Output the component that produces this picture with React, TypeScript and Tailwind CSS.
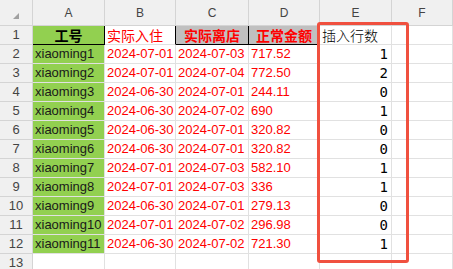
import React from 'react';

const COLS = ['A', 'B', 'C', 'D', 'E', 'F'];

const ROWS: [string, string, string, string, number][] = [
  ['xiaoming1', '2024-07-01', '2024-07-03', '717.52', 1],
  ['xiaoming2', '2024-07-01', '2024-07-04', '772.50', 2],
  ['xiaoming3', '2024-06-30', '2024-07-01', '244.11', 0],
  ['xiaoming4', '2024-06-30', '2024-07-02', '690', 1],
  ['xiaoming5', '2024-06-30', '2024-07-01', '320.82', 0],
  ['xiaoming6', '2024-06-30', '2024-07-01', '320.82', 0],
  ['xiaoming7', '2024-07-01', '2024-07-03', '582.10', 1],
  ['xiaoming8', '2024-07-01', '2024-07-03', '336', 1],
  ['xiaoming9', '2024-06-30', '2024-07-01', '279.13', 0],
  ['xiaoming10', '2024-07-01', '2024-07-02', '296.98', 0],
  ['xiaoming11', '2024-06-30', '2024-07-02', '721.30', 1],
];

const gridCols = 'grid grid-cols-[33px_72px_71px_73px_71px_72px_1fr]';
const cell = 'h-[19px] border-r border-b border-[#e1e1e1] px-[2px] flex items-end pb-[1px] leading-[16px] whitespace-nowrap overflow-hidden';
const rowHead = 'h-[19px] border-r border-b border-[#d4d4d4] bg-[#f0f0f0] flex items-center justify-center text-[13px] text-[#444]';
const cjk = { fontFamily: '"Noto Sans CJK SC", sans-serif' };
const mono = { fontFamily: '"DejaVu Sans Mono", monospace' };

export default function App() {
  return (
    <div
      className="relative w-[453px] h-[269px] overflow-hidden bg-white text-[13px]"
      style={{ fontFamily: '"Liberation Sans", "Noto Sans CJK SC", sans-serif' }}
    >
      {/* column headers */}
      <div className={gridCols}>
        <div className="h-[26px] border-r border-b border-[#d4d4d4] bg-[#f0f0f0] relative">
          <div className="absolute right-[13px] bottom-[6px] w-0 h-0 border-l-[6px] border-l-transparent border-b-[6px] border-b-[#a0a0a0]" />
        </div>
        {COLS.map((c) => (
          <div key={c} className="h-[26px] border-r border-b border-[#d4d4d4] bg-[#f0f0f0] flex items-end justify-center pb-[3px] text-[12px] text-[#444]">
            {c}
          </div>
        ))}
      </div>

      {/* row 1 */}
      <div className={gridCols}>
        <div className={rowHead}>1</div>
        <div className={`${cell} bg-[#92d050] justify-center font-bold text-black text-[14px] !border-r-black !border-b-black`} style={cjk}>工号</div>
        <div className={`${cell} text-[#ff0000] text-[14px] !border-r-black`} style={cjk}>实际入住</div>
        <div className={`${cell} bg-[#c0c0c0] justify-center font-bold text-[#ff0000] text-[14px] !border-r-black !border-b-black`} style={cjk}>实际离店</div>
        <div className={`${cell} bg-[#c0c0c0] justify-center font-bold text-[#ff0000] text-[14px] !border-r-black !border-b-black`} style={cjk}>正常金额</div>
        <div className={`${cell} text-black text-[14px] font-light`} style={cjk}>插入行数</div>
        <div className={cell} />
      </div>

      {ROWS.map((r, i) => (
        <div key={i} className={gridCols}>
          <div className={rowHead}>{i + 2}</div>
          <div className={`${cell} bg-[#92d050] text-[#1a1a1a]`}>{r[0]}</div>
          <div className={`${cell} text-[#ff0000]`}>{r[1]}</div>
          <div className={`${cell} text-[#ff0000]`}>{r[2]}</div>
          <div className={`${cell} text-[#ff0000]`}>{r[3]}</div>
          <div className={`${cell} justify-end text-black text-[14px] pr-[3px]`} style={mono}>{r[4]}</div>
          <div className={cell} />
        </div>
      ))}

      {/* row 13 */}
      <div className={gridCols}>
        <div className={rowHead}>13</div>
        <div className={cell} />
        <div className={cell} />
        <div className={cell} />
        <div className={cell} />
        <div className={cell} />
        <div className={cell} />
      </div>

      {/* highlight box */}
      <div className="absolute left-[317px] top-[22px] w-[92px] h-[241px] border-[3px] border-[#f0503f] rounded-[3px] pointer-events-none" />
    </div>
  );
}
